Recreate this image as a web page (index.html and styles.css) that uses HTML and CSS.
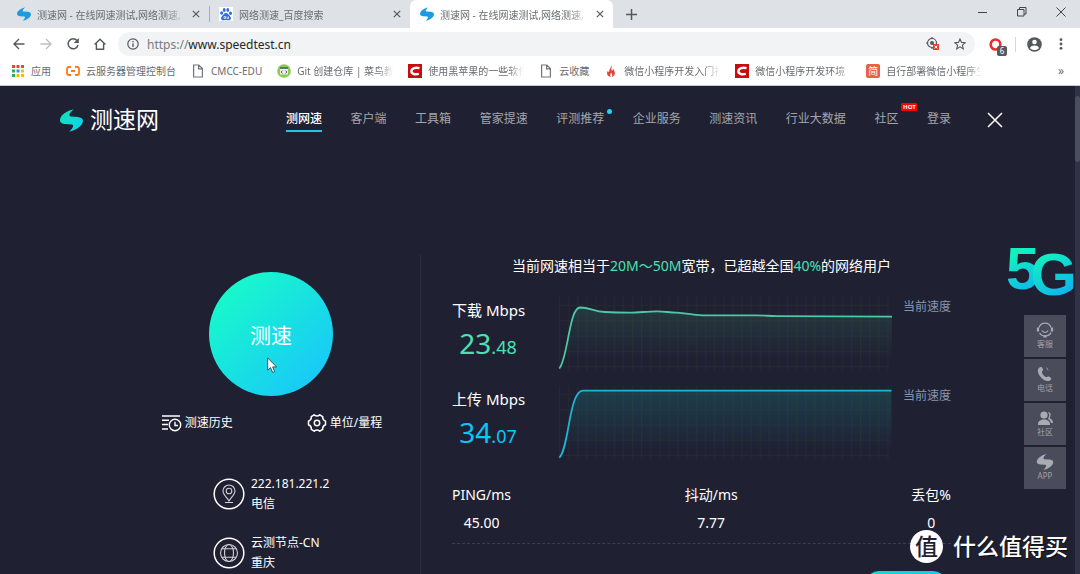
FILE: index.html
```html
<!DOCTYPE html>
<html lang="zh-CN">
<head>
<meta charset="utf-8">
<title>测速网</title>
<link rel="stylesheet" href="styles.css">
</head>
<body>
<svg class="defs" width="0" height="0" aria-hidden="true">
  <defs>
    <linearGradient id="brand" x1="0" y1="0" x2="1" y2="1"><stop offset="0" stop-color="#0be6b4"/><stop offset="1" stop-color="#17cdf5"/></linearGradient>
    <linearGradient id="fillDown" x1="0" y1="0" x2="0" y2="1"><stop offset="0" stop-color="#4ddb90" stop-opacity=".13"/><stop offset=".8" stop-color="#4ddbb0" stop-opacity="0"/></linearGradient>
    <linearGradient id="fillUp" x1="0" y1="0" x2="0" y2="1"><stop offset="0" stop-color="#10b0a8" stop-opacity=".2"/><stop offset=".85" stop-color="#16b8c8" stop-opacity="0"/></linearGradient>
    <pattern id="grid" x="4" y="8" width="9.15" height="15.3" patternUnits="userSpaceOnUse"><path d="M.5 0V15.3M0 .5H9.15" stroke="#262830" fill="none"/></pattern>
    <symbol id="bolt" viewBox="0 0 70 68"><path d="M42 0C22 4 0 18 0 33c0 8 8 11 16 12l20 1c7 1 5 10-8 22 20-4 42-18 42-33 0-8-8-11-16-12l-20-1c-9-1-7-10 8-22z"/></symbol>
    <symbol id="cross" viewBox="0 0 10 10"><path d="M1 1l8 8M9 1l-8 8" fill="none" stroke="currentColor" stroke-width="1.5"/></symbol>
    <symbol id="page" viewBox="0 0 14 14"><path d="M2.6 1h5.2l3.6 3.6V13H2.6zM7.6 1v3.8h3.8" fill="none" stroke="#70757a" stroke-width="1.2"/></symbol>
    <symbol id="csdn" viewBox="0 0 14 14"><path d="M0 0h14v14H0z" fill="#c90c10"/><path d="M11.5 4.2C8 3.2 3.6 4 3.4 7.3c0 3 4 3.4 7.4 2.5" fill="none" stroke="#fff" stroke-width="2.4"/></symbol>
  </defs>
</svg>
<div class="window">
  <div class="tabstrip">
    <div class="tab">
      <svg class="icon14 blue"><use href="#bolt"/></svg>
      <span class="tab-title">测速网 - 在线网速测试,网络测速,</span>
      <button class="tab-close" aria-label="关闭标签页"><svg><use href="#cross"/></svg></button>
    </div>
    <div class="tab tab-divided">
      <svg class="icon14" viewBox="0 0 14 14"><path fill="#fff" d="M0 0h14v14H0z"/><g fill="#2f6be8"><ellipse cx="2.6" cy="6" rx="1.5" ry="1.8"/><ellipse cx="5.2" cy="3" rx="1.4" ry="1.9"/><ellipse cx="8.8" cy="3" rx="1.4" ry="1.9"/><ellipse cx="11.5" cy="6.2" rx="1.5" ry="1.8"/><path d="M7 6c2 0 2.6 2 4.2 3.4 1.6 1.8.5 3.8-1.5 3.800-1 0-1.700-.3-2.700-.3s-1.700.3-2.700.3c-2 0-3-2-1.500-3.800C4.400 8 5 6 7 6z"/></g><path d="M5 9.500h1.500v2H5zM8 9.500v2h1.500v-2" fill="none" stroke="#fff" stroke-width=".7"/></svg>
      <span class="tab-title">网络测速_百度搜索</span>
      <button class="tab-close" aria-label="关闭标签页"><svg><use href="#cross"/></svg></button>
    </div>
    <div class="tab tab-active">
      <svg class="icon14 blue"><use href="#bolt"/></svg>
      <span class="tab-title">测速网 - 在线网速测试,网络测速,</span>
      <button class="tab-close" aria-label="关闭标签页"><svg><use href="#cross"/></svg></button>
    </div>
    <button class="new-tab" aria-label="新标签页"><svg width="11" height="11" viewBox="0 0 11 11"><path d="M5.500 0v11M0 5.500h11" stroke="#55585d" stroke-width="1.500"/></svg></button>
    <div class="window-controls">
      <button aria-label="最小化"><svg width="10" height="10"><path d="M0 5.500h9" stroke="#444" /></svg></button>
      <button aria-label="还原"><svg width="10" height="10" viewBox="0 0 10 10"><path d="M.5 2.500h6.500v6.500H.5zM2.500 2.500V.5h6.500v6.500H7" fill="none" stroke="#444"/></svg></button>
      <button aria-label="关闭"><svg width="10" height="10" viewBox="0 0 10 10"><path d="M.5.5l9 9M9.500.5l-9 9" stroke="#444"/></svg></button>
    </div>
  </div>

  <div class="toolbar">
    <button class="tool" aria-label="后退"><svg width="12" height="12" viewBox="0 0 12 12"><path d="M11.500 6H1M6 1L1 6l5 5" fill="none" stroke="#55585d" stroke-width="1.400"/></svg></button>
    <button class="tool" aria-label="前进"><svg width="12" height="12" viewBox="0 0 12 12"><path d="M.5 6H11M6 1l5 5-5 5" fill="none" stroke="#bcbfc3" stroke-width="1.400"/></svg></button>
    <button class="tool" aria-label="重新加载"><svg width="12" height="12" viewBox="0 0 12 12"><path d="M10 2.600A5 5 0 1 0 11 7" fill="none" stroke="#55585d" stroke-width="1.500"/><path d="M11.800 0v5H6.800z" fill="#55585d"/></svg></button>
    <button class="tool" aria-label="主页"><svg width="12" height="12" viewBox="0 0 12 12"><path d="M.6 6.500L6 1.200l5.400 5.300M2.400 5.500v5.800h7.200V5.500" fill="none" stroke="#55585d" stroke-width="1.400"/></svg></button>
    <div class="omnibox">
      <svg width="12" height="12" viewBox="0 0 12 12"><circle cx="6" cy="6" r="5.200" fill="none" stroke="#55585d" stroke-width="1.200"/><path d="M6 5.200V9M6 3v1.300" stroke="#55585d" stroke-width="1.300"/></svg>
      <a class="address" href="#"><span class="scheme">https://</span>www.speedtest.cn</a>
      <svg class="locate" width="14" height="14" viewBox="0 0 14 14"><circle cx="6" cy="6" r="4.500" fill="none" stroke="#55585d" stroke-width="1.200"/><circle cx="6" cy="6" r="2" fill="#55585d"/><path d="M6 0v2M0 6h2M6 10v2" stroke="#55585d" stroke-width="1.200"/><path d="M7 7h6v6H7z" fill="#e04336"/><path d="M8.700 8.700l2.600 2.600M11.300 8.700l-2.600 2.600" stroke="#fff"/></svg>
      <svg width="12" height="12" viewBox="0 0 12 12"><path d="M6 .9l1.500 3.500 3.800.3-2.900 2.500.9 3.700L6 8.900l-3.300 2 .9-3.700L.7 4.700l3.800-.3z" fill="none" stroke="#55585d" stroke-width="1.100"/></svg>
    </div>
    <button class="extension" aria-label="扩展程序"><svg width="13" height="13" viewBox="0 0 13 13"><ellipse cx="6.500" cy="6.500" rx="4.800" ry="5" fill="none" stroke="#ef2b30" stroke-width="2.600"/></svg><span class="ext-count">6</span></button>
    <button class="avatar" aria-label="用户"><svg width="15" height="15" viewBox="0 0 15 15"><circle cx="7.500" cy="7.500" r="7.300" fill="#55585d"/><circle cx="7.500" cy="5" r="2.300" fill="#fff"/><path d="M3 11c1-3.300 8-3.300 9 0-2 2.700-7 2.700-9 0z" fill="#fff"/></svg></button>
    <button class="menu" aria-label="菜单"><svg width="4" height="12"><g fill="#55585d"><circle cx="2" cy="1.700" r="1.400"/><circle cx="2" cy="6" r="1.400"/><circle cx="2" cy="10.300" r="1.400"/></g></svg></button>
  </div>

  <nav class="bookmarks" aria-label="书签">
    <a href="#"><svg class="icon14" viewBox="0 0 14 14"><path fill="#e8453c" d="M1 1h3v3H1zM5.500 1h3v3h-3zM10 1h3v3h-3z"/><path fill="#34a853" d="M1 5.500h3v3H1z"/><path fill="#4285f4" d="M5.500 5.500h3v3h-3z"/><path fill="#fbbc05" d="M10 5.500h3v3h-3zM5.500 10h3v3h-3zM10 10h3v3h-3z"/><path fill="#34a853" d="M1 10h3v3H1z"/></svg><span>应用</span></a>
    <a href="#"><svg class="icon14" viewBox="0 0 14 14"><path d="M5 3H3Q1 3 1 5v4q0 2 2 2h2M9 3h2q2 0 2 2v4q0 2-2 2H9M5 7h4" fill="none" stroke="#ff7a1a" stroke-width="1.800"/></svg><span>云服务器管理控制台</span></a>
    <a href="#"><svg class="icon14"><use href="#page"/></svg><span>CMCC-EDU</span></a>
    <a href="#"><svg class="icon14" viewBox="0 0 14 14"><circle cx="7" cy="7" r="6.800" fill="#8ccb4e"/><path d="M3 3.500h8v7H3z" fill="#e9efe6"/><path d="M3 4h8" stroke="#3b5a66" stroke-width="1.600"/><path d="M5.500 6.700L4 8l1.500 1.300M8.500 6.700L10 8 8.500 9.300" fill="none" stroke="#3b5a66" stroke-width=".9"/></svg><span class="clip">Git 创建仓库 | 菜鸟教</span></a>
    <a href="#"><svg class="icon14"><use href="#csdn"/></svg><span class="clip">使用黑苹果的一些软件</span></a>
    <a href="#"><svg class="icon14"><use href="#page"/></svg><span>云收藏</span></a>
    <a href="#"><svg class="icon14" viewBox="0 0 14 14"><path d="M7 1c1.500 2-.2 4 .9 6 .8-.6 1-1.400 1-2.200 3.200 3.600 2.400 7-1.100 8.200 1-2 .3-3-.6-4.200C6 10 6 11.500 6.800 13 2.600 12 2.400 9 4 6.800c.2 1 .6 1.400 1.200 1.500C4.800 5.500 7.500 4 7 1z" fill="#e2423a"/></svg><span class="clip">微信小程序开发入门社</span></a>
    <a href="#"><svg class="icon14"><use href="#csdn"/></svg><span class="clip">微信小程序开发环境</span></a>
    <a href="#"><b class="jian">简</b><span class="clip">自行部署微信小程序生</span></a>
    <button class="more" aria-label="更多书签">»</button>
  </nav>

  <div class="viewport">
    <div class="site">
      <header class="site-header">
        <a class="logo" href="#"><svg width="23" height="23" fill="url(#brand)"><use href="#bolt"/></svg><span>测速网</span></a>
        <nav class="site-nav">
          <a class="current" href="#">测网速</a>
          <a href="#">客户端</a>
          <a href="#">工具箱</a>
          <a href="#">管家提速</a>
          <a href="#">评测推荐<i class="dot"></i></a>
          <a href="#">企业服务</a>
          <a href="#">测速资讯</a>
          <a href="#">行业大数据</a>
          <a href="#">社区<em class="hot">HOT</em></a>
          <a href="#">登录</a>
        </nav>
        <button class="dismiss" aria-label="关闭"><svg width="16" height="16" viewBox="0 0 16 16"><path d="M1 1l14 14M15 1L1 15" stroke="#fff" stroke-width="1.500"/></svg></button>
      </header>

      <main class="main">
        <section class="control">
          <button class="start">测速</button>
          <svg class="cursor" width="11" height="17" viewBox="0 0 11 17"><path d="M.7 1v12.200l2.800-2.600 2.200 4.900 2-.9-2.100-4.700H9.600z" fill="#fff" stroke="#333" stroke-width=".8"/></svg>
          <div class="links">
            <a href="#"><svg width="20" height="18" viewBox="0 0 20 18"><g fill="none" stroke="#fff" stroke-width="1.400"><path d="M0 2h18M0 6.200h7M0 10.500h6M0 15h6"/><circle cx="13" cy="11" r="5.700"/><path d="M13 7.800V11.500h3"/></g></svg>测速历史</a>
            <a href="#"><svg width="20" height="18" viewBox="0 0 20 18"><g fill="none" stroke="#fff" stroke-width="1.500"><circle cx="10" cy="9" r="2.700"/><path d="M7.300.8q2.700 2.200 5.400 0l3 1.800q-.4 3.300 2.800 4.600v3.600q-3.200 1.300-2.800 4.600l-3 1.800q-2.700-2.200-5.400 0l-3-1.800q.4-3.300-2.800-4.600V7.200q3.200-1.300 2.800-4.600z"/></g></svg>单位/量程</a>
          </div>
          <dl class="info">
            <div class="info-row">
              <svg width="32" height="32" viewBox="0 0 32 32"><circle cx="16" cy="16" r="14.800" fill="none" stroke="#fff" stroke-width="1.500"/><g fill="none" stroke="#cfd0d5" stroke-width="1.100"><circle cx="16" cy="13" r="2.800"/><path d="M16 23c-2-3.500-6-6.400-6-10a6 6 0 0 1 12 0c0 3.600-4 6.500-6 10zM12 24.500h8"/></g></svg>
              <div><dt>222.181.221.2</dt><dd>电信</dd></div>
            </div>
            <div class="info-row">
              <svg width="32" height="32" viewBox="0 0 32 32"><circle cx="16" cy="16" r="14.800" fill="none" stroke="#fff" stroke-width="1.500"/><g fill="none" stroke="#cfd0d5" stroke-width="1.100"><circle cx="16" cy="16" r="8.500"/><ellipse cx="16" cy="16" rx="4.500" ry="8.500"/><path d="M8.600 11.700h14.800M8.600 20.300h14.800"/></g></svg>
              <div><dt>云测节点-CN</dt><dd>重庆</dd></div>
            </div>
          </dl>
        </section>

        <section class="results">
          <p class="summary">当前网速相当于<span class="green">20M～50M</span>宽带，已超越全国<span class="green">40%</span>的网络用户</p>
          <div class="speed">
            <div class="reading"><h2>下载 Mbps</h2><p class="green"><b>23</b>.48</p></div>
            <svg class="chart" viewBox="0 0 338 74" preserveAspectRatio="none">
              <path d="M4 0h332v74H4z" fill="url(#grid)"/>
              <path d="M4.300 71.500C13 62 14 11 25 10.500c10 0 14 4 25 4.500 8 .5 17 .7 25 .7 10 0 17-1.400 27-1.400 8 0 12 1.200 20 1.400 10 .3 15 2.600 26 2.600h54c8 0 12 .7 20 .9l135.500.5V74H4.300z" fill="url(#fillDown)"/>
              <path d="M4.300 71.500C13 62 14 11 25 10.500c10 0 14 4 25 4.500 8 .5 17 .7 25 .7 10 0 17-1.400 27-1.400 8 0 12 1.200 20 1.400 10 .3 15 2.600 26 2.600h54c8 0 12 .7 20 .9l135.500.5" fill="none" stroke="#4bc9a6" stroke-width="1.800"/>
            </svg>
            <span class="legend">当前速度</span>
          </div>
          <div class="speed">
            <div class="reading"><h2>上传 Mbps</h2><p class="cyan"><b>34</b>.07</p></div>
            <svg class="chart" viewBox="0 0 338 74" preserveAspectRatio="none">
              <path d="M4 0h332v74H4z" fill="url(#grid)"/>
              <path d="M4.300 71.700C14 63 14 4.700 28 4.700h309.500V74H4.300z" fill="url(#fillUp)"/>
              <path d="M4.300 71.700C14 63 14 4.700 28 4.700h309.500" fill="none" stroke="#1fb4d2" stroke-width="1.800"/>
            </svg>
            <span class="legend">当前速度</span>
          </div>
          <dl class="stats">
            <div><dt>PING/ms</dt><dd>45.00</dd></div>
            <div><dt>抖动/ms</dt><dd>7.77</dd></div>
            <div><dt>丢包%</dt><dd>0</dd></div>
          </dl>
          <button class="action" aria-label="更多"></button>
        </section>
      </main>

      <aside class="side">
        <a class="five-g" href="#"><span class="five">5</span><span class="gee">G</span></a>
        <button><svg width="18" height="16" viewBox="0 0 18 16"><g fill="none" stroke="#a9abb3" stroke-width="1.200"><path d="M3 5.500a6.300 6.300 0 0 1 12 0M3.500 11q2 3 5.500 3 4.500 0 6-3.500M5.800 8.500q3.200 4 6.400 0"/><path d="M2 5.500v4M16 5.500v4M7.500 14.300h3" stroke-width="2.200"/></g></svg>客服</button>
        <button><svg width="18" height="16" viewBox="0 0 18 16"><path d="M2.500 2.500C4.500.5 6 .5 6.800 3c.5 1.800-1 2-.8 3.500.4 2 2.400 4 4 4.600 1.300.4 1.800-1 3.400-.3 2.400 1.200 2.400 2.600.2 4C8 17-.5 7 2.500 2.500zM10 1q2.500 1.500 2.500 4l-1.500-2z" fill="#a9abb3"/></svg>电话</button>
        <button><svg width="18" height="16" viewBox="0 0 18 16"><g fill="#a9abb3"><circle cx="8" cy="5" r="3.600"/><path d="M2 14c0-6 12-6 12 0v1H2zM12 2q3.500.5 2.500 4l-1 2q3.500 1.500 3.500 5h-2q-.5-3-3-4l1.500-4z"/></g></svg>社区</button>
        <button><svg width="18" height="16" fill="#a9abb3"><use href="#bolt"/></svg>APP</button>
      </aside>

      <div class="watermark"><span class="stamp">值</span>什么值得买</div>
    </div>
    <div class="scrollbar"><div class="thumb"></div></div>
  </div>
</div>
</body>
</html>
```

FILE: styles.css
```css
* { box-sizing: border-box; }

body {
  margin: 0;
  font-family: "Noto Sans", "Noto Sans CJK SC", sans-serif;
  font-size: 12px;
  color: #fff;
}

button {
  padding: 0;
  border: 0;
  background: none;
  color: inherit;
  font: inherit;
}

a { color: inherit; text-decoration: none; }
h2, p, dl, dd { margin: 0; font-weight: 400; }
svg { flex: none; }
.defs { position: absolute; }
.icon14 { width: 14px; height: 14px; flex: none; }
.blue { fill: #1b9be0; }

.window {
  display: flex;
  flex-direction: column;
  height: 100vh;
  overflow: hidden;
}

/* Browser chrome */
.tabstrip {
  display: flex;
  height: 28px;
  padding-left: 7px;
  background: #dee1e6;
  color: #696c71;
}

.tab {
  display: flex;
  align-items: center;
  gap: 6px;
  width: 202px;
  padding: 0 9px 0 10px;
  font-size: 10px;
}

.tab-divided {
  width: 201px;
  background: linear-gradient(#a9acb1, #a9acb1) left center / 1px 16px no-repeat;
}

.tab-active {
  width: 203px;
  border-radius: 6px 6px 0 0;
  background: #fff;
}

.tab-title {
  flex: 1;
  overflow: hidden;
  white-space: nowrap;
  mask-image: linear-gradient(to right, #000 85%, transparent);
}

.tab-close { display: flex; color: #55585d; }
.tab-close svg { width: 8px; height: 8px; }

.new-tab {
  display: grid;
  place-items: center;
  width: 36px;
}

.window-controls { display: flex; height: 24px; margin-left: auto; }

.window-controls button {
  display: grid;
  place-items: center;
  width: 39px;
}

.toolbar {
  display: flex;
  align-items: center;
  height: 32px;
  padding: 0 10px 0 5px;
  background: #fff;
}

.tool { display: grid; place-items: center; width: 27px; height: 24px; }

.omnibox {
  display: flex;
  flex: 1;
  align-items: center;
  height: 24px;
  margin-left: 5px;
  padding: 0 9px;
  border-radius: 12px;
  background: #f1f3f4;
}

.address { flex: 1; padding-left: 8px; color: #25272a; }
.scheme { color: #777b80; }
.locate { margin-right: 14px; }

.extension {
  position: relative;
  display: flex;
  margin-left: 14px;
}

.ext-count {
  position: absolute;
  top: 8px;
  left: 8px;
  width: 10px;
  border-radius: 2px;
  background: #55585d;
  color: #fff;
  font-size: 8px;
  line-height: 10px;
}

.avatar {
  display: flex;
  margin-left: 13px;
  padding-left: 11px;
  border-left: 1px solid #d5d7da;
}

.menu { display: flex; margin-left: 17px; padding-right: 7px; }

.bookmarks {
  display: flex;
  align-items: center;
  gap: 15px;
  height: 26px;
  padding: 0 16px 4px 11px;
  border-bottom: 1px solid #c9cbcf;
  background: #fff;
  color: #686b70;
  font-size: 10px;
}

.bookmarks a { display: flex; align-items: center; gap: 6px; white-space: nowrap; }

.bookmarks .clip {
  width: 96px;
  overflow: hidden;
  mask-image: linear-gradient(to right, #000 80px, transparent 96px);
}

.jian {
  width: 14px;
  border-radius: 2px;
  background: #e8604a;
  color: #fff;
  font-size: 10px;
  font-weight: 400;
  line-height: 14px;
  text-align: center;
}

.more { margin-left: auto; font-size: 12px; }

/* Page */
.viewport {
  display: flex;
  flex: 1;
  min-height: 0;
  background: #1f2133;
}

.site {
  position: relative;
  flex: 1;
  overflow: hidden;
}

.scrollbar { width: 5px; padding-top: 10px; background: #313247; }
.thumb { height: 66px; border-radius: 3px; background: #4b4e5e; }

.site-header {
  display: flex;
  align-items: center;
  padding: 16px 72px 0 60px;
}

.logo {
  display: flex;
  align-items: center;
  gap: 7px;
  width: 226px;
  font-size: 23px;
  font-weight: 400;
  line-height: 34px;
}

.logo span { padding-bottom: 2px; }

.site-nav {
  display: flex;
  flex: 1;
  justify-content: space-between;
  color: #a5a6ad;
  line-height: 22px;
}

.site-nav a { position: relative; border-bottom: 2px solid transparent; }
.site-nav .current { border-color: #2bc4dc; color: #fff; font-weight: 500; }

.dot {
  position: absolute;
  top: 1px;
  right: -8px;
  width: 5px;
  height: 5px;
  border-radius: 50%;
  background: #1fd3f5;
}

.hot {
  position: absolute;
  top: -5px;
  right: -19px;
  width: 16px;
  border-radius: 1px;
  background: #fe0000;
  color: #fff;
  font-size: 6px;
  font-style: normal;
  font-weight: 700;
  line-height: 8px;
  text-align: center;
}

.dismiss { display: flex; margin-left: 36px; }

.main { display: flex; padding: 116px 124px 0 122px; }

.control {
  position: relative;
  display: flex;
  flex-direction: column;
  align-items: center;
  width: 299px;
  height: 330px;
  padding-top: 18px;
  border-right: 1px solid #2c2e3f;
}

.start {
  width: 124px;
  height: 124px;
  border-radius: 50%;
  background: linear-gradient(135deg, #18fbc9 10%, #19c6fb 92%);
  font-size: 21px;
}

.cursor { position: absolute; top: 103px; left: 145px; }

.links { display: flex; gap: 74px; margin-top: 17px; padding-left: 2px; }
.links a { display: flex; align-items: center; gap: 3px; line-height: 20px; }

.info { display: grid; gap: 19px; width: 116px; margin-top: 41px; }
.info-row { display: flex; align-items: center; gap: 6px; line-height: 20px; white-space: nowrap; }

.results { flex: 1; padding-left: 31px; }

.summary {
  font-size: 14px;
  line-height: 24px;
  text-align: center;
  white-space: nowrap;
}

.green { color: #4de0b2; }
.cyan { color: #08c8fa; }

.speed { display: flex; align-items: start; height: 89px; padding-top: 19px; }

.reading { width: 72px; white-space: nowrap; }
.reading h2 { font-size: 15px; line-height: 26px; }
.reading p { font-size: 18px; line-height: 40px; text-align: center; }
.reading b { font-size: 28px; font-weight: 400; }

.chart { flex: 1; min-width: 0; height: 74px; margin: 0 11px 0 31px; }

.legend { color: #8796af; line-height: 20px; }

.stats {
  display: flex;
  justify-content: space-between;
  padding: 25px 0 6px;
  border-bottom: 1px dashed #3b3e50;
  font-size: 14px;
  line-height: 28px;
  text-align: center;
}

.action {
  display: block;
  width: 82px;
  height: 28px;
  margin: 27px 4px 0 auto;
  border-radius: 14px;
  background: linear-gradient(90deg, #10dcc4, #18c8f0);
}

.side {
  position: absolute;
  top: 153px;
  right: 0;
  display: flex;
  flex-direction: column;
  align-items: flex-end;
  gap: 2px;
}

.side button {
  display: flex;
  flex-direction: column;
  align-items: center;
  justify-content: center;
  width: 42px;
  height: 42px;
  margin-right: 9px;
  background: #4a4c5b;
  color: #a0a2aa;
  font-size: 8px;
  line-height: 12px;
}

.five-g {
  display: flex;
  height: 74px;
  margin-right: -2px;
  font-family: "Liberation Sans", sans-serif;
  font-size: 60px;
  font-weight: 700;
  line-height: 60px;
}

.five, .gee {
  height: 66px;
  background: linear-gradient(150deg, #12f0c0 25%, #10b4ee 80%);
  background-clip: text;
  color: transparent;
}

.gee { margin-left: -9px; padding-top: 6px; }

.watermark {
  position: absolute;
  right: 7px;
  bottom: 10px;
  display: flex;
  align-items: center;
  gap: 10px;
  font-size: 23px;
  font-weight: 500;
  line-height: 36px;
  text-shadow: 1px 1px 1px #111;
}

.stamp {
  width: 33px;
  height: 33px;
  border-radius: 50%;
  background: #fff;
  color: #1f2133;
  line-height: 32px;
  text-align: center;
  text-shadow: none;
}
```
